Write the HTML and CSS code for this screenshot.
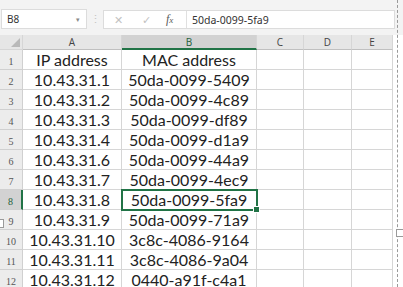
FILE: index.html
```html
<!DOCTYPE html>
<html lang="en">
<head>
  <meta charset="UTF-8">
  <title>Sheet1</title>
  <link rel="stylesheet" href="styles.css">
</head>
<body>
  <div class="app">

    <header class="formula-bar">
      <div class="name-box">
        <span class="name-ref">B8</span>
        <span class="name-drop">&#9662;</span>
      </div>
      <div class="grip">&#8942;</div>
      <div class="formula">
        <div class="formula-tools">
          <span class="tool tool-cancel">&#10005;</span>
          <span class="tool tool-ok">&#10003;</span>
          <span class="tool tool-fx"><i>f</i><i class="fx-x">x</i></span>
        </div>
        <div class="formula-text">50da-0099-5fa9</div>
      </div>
    </header>

    <div class="sheet">
      <div class="corner"></div>
      <div class="col-head">A</div>
      <div class="col-head col-head-active">B</div>
      <div class="col-head">C</div>
      <div class="col-head">D</div>
      <div class="col-head">E</div>

      <div class="row-head">1</div>
      <div class="cell">IP address</div>
      <div class="cell">MAC address</div>
      <div class="cell"></div><div class="cell"></div><div class="cell"></div>

      <div class="row-head">2</div>
      <div class="cell">10.43.31.1</div>
      <div class="cell">50da-0099-5409</div>
      <div class="cell"></div><div class="cell"></div><div class="cell"></div>

      <div class="row-head">3</div>
      <div class="cell">10.43.31.2</div>
      <div class="cell">50da-0099-4c89</div>
      <div class="cell"></div><div class="cell"></div><div class="cell"></div>

      <div class="row-head">4</div>
      <div class="cell">10.43.31.3</div>
      <div class="cell">50da-0099-df89</div>
      <div class="cell"></div><div class="cell"></div><div class="cell"></div>

      <div class="row-head">5</div>
      <div class="cell">10.43.31.4</div>
      <div class="cell">50da-0099-d1a9</div>
      <div class="cell"></div><div class="cell"></div><div class="cell"></div>

      <div class="row-head">6</div>
      <div class="cell">10.43.31.6</div>
      <div class="cell">50da-0099-44a9</div>
      <div class="cell"></div><div class="cell"></div><div class="cell"></div>

      <div class="row-head">7</div>
      <div class="cell">10.43.31.7</div>
      <div class="cell">50da-0099-4ec9</div>
      <div class="cell"></div><div class="cell"></div><div class="cell"></div>

      <div class="row-head row-head-active">8</div>
      <div class="cell">10.43.31.8</div>
      <div class="cell cell-active">50da-0099-5fa9<span class="fill-handle"></span></div>
      <div class="cell"></div><div class="cell"></div><div class="cell"></div>

      <div class="row-head">9</div>
      <div class="cell">10.43.31.9</div>
      <div class="cell">50da-0099-71a9</div>
      <div class="cell"></div><div class="cell"></div><div class="cell"></div>

      <div class="row-head">10</div>
      <div class="cell">10.43.31.10</div>
      <div class="cell">3c8c-4086-9164</div>
      <div class="cell"></div><div class="cell"></div><div class="cell"></div>

      <div class="row-head">11</div>
      <div class="cell">10.43.31.11</div>
      <div class="cell">3c8c-4086-9a04</div>
      <div class="cell"></div><div class="cell"></div><div class="cell"></div>

      <div class="row-head">12</div>
      <div class="cell">10.43.31.12</div>
      <div class="cell">0440-a91f-c4a1</div>
      <div class="cell"></div><div class="cell"></div><div class="cell"></div>
    </div>

    <div class="page-break"></div>
    <div class="page-handle"></div>
    <div class="edge-handle"></div>

  </div>
</body>
</html>
```

FILE: styles.css
```css
html,
body {
  margin: 0;
  padding: 0
}

body {
  background: #fff;
  font-family: "Noto Sans", "Liberation Sans", sans-serif
}

.app {
  position: relative;
  width: 403px;
  height: 287px;
  overflow: hidden;
  background: #fff
}

/* formula bar */

.formula-bar {
  display: flex;
  align-items: stretch;
  height: 35px;
  box-sizing: border-box;
  padding: 9px 8px 6px 1px;
  background: #f3f3f3
}

.name-box {
  display: flex;
  align-items: center;
  justify-content: space-between;
  width: 86px;
  box-sizing: border-box;
  padding: 0 6px 0 5px;
  background: #fff;
  border: 1px solid #dcdcdc
}

.name-ref {
  font-size: 10px;
  color: #333
}

.name-drop {
  font-size: 7px;
  color: #8a8a8a
}

.grip {
  width: 16px;
  text-align: center;
  font-size: 11px;
  line-height: 20px;
  color: #c4c4c4
}

.formula {
  flex: 1;
  display: flex;
  align-items: center;
  background: #fff;
  border: 1px solid #dcdcdc;
  margin-top: 1px
}

.formula-tools {
  display: flex;
  align-items: center;
  height: 100%;
  width: 83px;
  box-sizing: border-box;
  border-right: 1px solid #e0e0e0
}

.tool {
  color: #c2c2c2;
  font-size: 11px;
  text-align: center
}

.tool-cancel {
  margin-left: 7px;
  width: 14px
}

.tool-ok {
  margin-left: 14px;
  width: 14px
}

.tool-fx {
  margin-left: 13px;
  color: #5a5a5a;
  font-family: "Liberation Serif", serif;
  font-size: 12px
}

.fx-x {
  font-size: 9px
}

.formula-text {
  padding-left: 5px;
  font-size: 10.5px;
  color: #333
}

/* grid */

.sheet {
  display: grid;
  grid-template-columns: 23px 99px 135px 47px 48px 41px;
  grid-template-rows: 15px repeat(12, 20px)
}

.sheet > div {
  box-sizing: border-box;
  border-right: 1px solid #d6d6d6;
  border-bottom: 1px solid #d6d6d6
}

.corner {
  position: relative;
  background: #e6e6e6;
  border-color: #c8c8c8
}

.corner::after {
  content: "";
  position: absolute;
  right: 2px;
  bottom: 2px;
  border-left: 9px solid transparent;
  border-bottom: 9px solid #b9b9b9
}

.col-head {
  background: #e6e6e6;
  text-align: center;
  font-family: "Open Sans", sans-serif;
  font-size: 10px;
  line-height: 14px;
  color: #444
}

.sheet > .col-head {
  border-bottom-color: #c0c0c0
}

.sheet > .col-head-active {
  background: #d2d2d2;
  border-bottom: 2px solid #217346;
  color: #1e5f3a
}

.row-head {
  background: #ececec;
  text-align: center;
  font-family: "Liberation Serif", serif;
  font-size: 10px;
  line-height: 24px;
  color: #555
}

.sheet > .row-head {
  border-color: #d0d0d0
}

.sheet > .row-head-active {
  background: #d2d2d2;
  border-right: 2px solid #217346;
  color: #1e5f3a
}

.cell {
  text-align: center;
  font-family: Lato, "Noto Sans", sans-serif;
  font-size: 16px;
  line-height: 19px;
  color: #222;
  white-space: nowrap
}

.cell-active {
  position: relative;
  outline: 2px solid #217346;
  outline-offset: -1px
}

.fill-handle {
  position: absolute;
  right: -4px;
  bottom: -4px;
  width: 5px;
  height: 5px;
  background: #217346;
  border: 1px solid #fff
}

/* page break overlay */

.page-break {
  position: absolute;
  top: 0;
  bottom: 0;
  left: 397px;
  border-left: 1px dashed #9a9a9a
}

.page-handle {
  position: absolute;
  left: 396px;
  top: 229px;
  width: 6px;
  height: 6px;
  background: #fff;
  border: 1px solid #9a9a9a
}

.edge-handle {
  position: absolute;
  left: -4px;
  top: 219px;
  width: 6px;
  height: 7px;
  background: #fff;
  border: 1px solid #9a9a9a
}
```
